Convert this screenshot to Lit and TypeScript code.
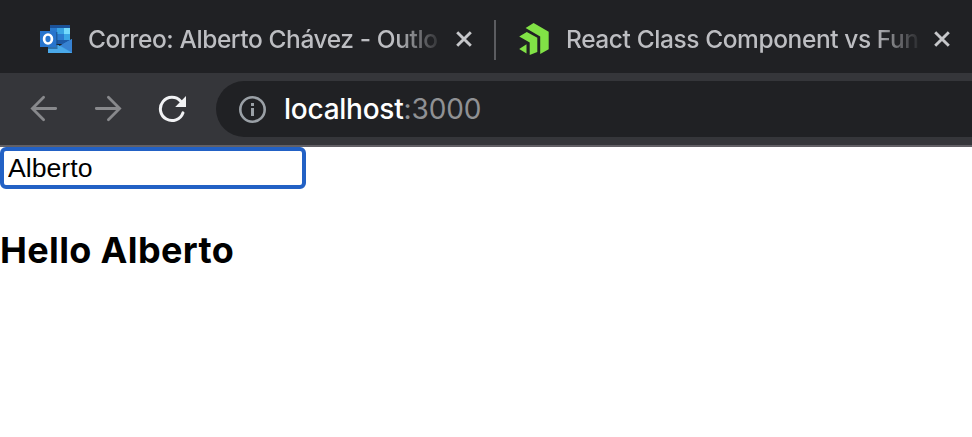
import { LitElement, html, css, svg } from "lit";
import { customElement, state } from "lit/decorators.js";

const outlookIcon = svg`
  <svg class="favicon" viewBox="0 0 32 28" width="32" height="28">
    <rect x="10" y="0" width="20" height="19" fill="#2a7fd0"></rect>
    <rect x="10" y="0" width="20" height="3" fill="#1b5299"></rect>
    <rect x="10" y="3" width="7" height="6" fill="#2979cd"></rect>
    <rect x="17" y="3" width="7" height="6" fill="#39a4e4"></rect>
    <rect x="24" y="3" width="6" height="6" fill="#74dafc"></rect>
    <rect x="17" y="9" width="7" height="6" fill="#2b7bd0"></rect>
    <rect x="24" y="9" width="6" height="6" fill="#3aa6e6"></rect>
    <rect x="17" y="15" width="13" height="4" fill="#1d5aa6"></rect>
    <path d="M8 16 L20 21 L32 14 V28 H8 Z" fill="#3f9bdf"></path>
    <path d="M20 20.5 L32 14 V27.5 Z" fill="#3782d2"></path>
    <path d="M8 28 V23 L18 20 L32 28 Z" fill="#4aa9e9"></path>
    <rect x="8" y="7" width="9.5" height="17" fill="#123b6d" opacity="0.5"></rect>
    <rect x="0" y="6" width="16" height="16" fill="#2774cd"></rect>
    <ellipse cx="8" cy="14" rx="3.9" ry="4.5" fill="none" stroke="#fff" stroke-width="2.7"></ellipse>
  </svg>`;

const progressIcon = svg`
  <svg class="favicon" viewBox="0 0 30 32" width="30" height="32">
    <g fill="#81e246">
      <path d="M14.6 0 L29.7 8.7 V26.2 L21.2 31 V13.6 L6.6 5 Z"></path>
      <path d="M7.8 8.9 L18.3 14.8 V28.9 L10.7 32 V19.6 L0.2 13.4 Z"></path>
      <path d="M7.5 21.2 V30.5 L0.2 26 Z"></path>
    </g>
  </svg>`;

const closeIcon = svg`
  <svg class="close" viewBox="0 0 16 16" width="16" height="16">
    <path d="M1.2 1.2 L14.8 14.8 M14.8 1.2 L1.2 14.8" fill="none" stroke="#c6c7ca" stroke-width="2.9"></path>
  </svg>`;

@customElement("browser-tabs")
class BrowserTabs extends LitElement {
  static styles = css`
    :host {
      display: flex;
      align-items: center;
      height: 73px;
      padding: 0 22px 0 40px;
      box-sizing: border-box;
      background: #202124;
      font-family: Inter, "Liberation Sans", sans-serif;
    }
    .tab { display: flex; align-items: center; height: 40px; margin-top: 5px; }
    .favicon { display: block; flex: none; }
    .title {
      flex: none;
      white-space: nowrap;
      height: 40px;
      line-height: 41px;
      margin-left: 16px;
      font-size: 24.5px;
      font-weight: 450;
      letter-spacing: -0.41px;
      color: #bdbec2;
      -webkit-mask-image: linear-gradient(90deg, #000 308px, transparent 356px);
    }
    .mail { width: 350px; }
    .article { width: 353px; margin-left: 17px; }
    .close { display: block; flex: none; margin-left: 18px; }
    .article + .close { margin-left: 15px; }
    .separator { width: 2px; height: 40px; margin: 7px 23px 0 22px; background: #5b5c60; }
  `;

  render() {
    return html`
      <div class="tab">
        ${outlookIcon}
        <div class="title mail">Correo: Alberto Chávez - Outlo</div>
        ${closeIcon}
      </div>
      <div class="separator"></div>
      <div class="tab">
        ${progressIcon}
        <div class="title article">React Class Component vs Fun</div>
        ${closeIcon}
      </div>
    `;
  }
}

@customElement("browser-toolbar")
class BrowserToolbar extends LitElement {
  static styles = css`
    :host {
      display: flex;
      align-items: center;
      height: 74px;
      box-sizing: border-box;
      border-bottom: 2px solid #626065;
      padding-left: 30px;
      background: #35363a;
      font-family: Inter, "Liberation Sans", sans-serif;
    }
    svg { display: block; flex: none; }
    .forward { margin-left: 36px; }
    .reload { margin-left: 36px; }
    .address {
      display: flex;
      align-items: center;
      flex: 1;
      height: 56px;
      margin-left: 30px;
      padding-left: 22px;
      border-radius: 28px 0 0 28px;
      background: #202124;
    }
    .url {
      margin-left: 17px;
      font-size: 28px;
      line-height: 57px;
      letter-spacing: -0.1px;
      white-space: nowrap;
      color: #909194;
    }
    .host { color: #fff; font-weight: 470; letter-spacing: -0.25px; }
  `;

  render() {
    return html`
      <svg width="28" height="28" viewBox="0 0 28 28" fill="none" stroke="#88898c" stroke-width="2.8" stroke-linecap="round">
        <path d="M25.7 13.5 H2.5 M13.6 2.3 L2.4 13.5 L13.6 24.7"></path>
      </svg>
      <svg class="forward" width="28" height="28" viewBox="0 0 28 28" fill="none" stroke="#88898c" stroke-width="2.8" stroke-linecap="round">
        <path d="M2.3 13.5 H25.5 M14.4 2.3 L25.6 13.5 L14.4 24.7"></path>
      </svg>
      <svg class="reload" width="28" height="28" viewBox="0 0 28 28">
        <path d="M24.9 17.9 A11.6 11.6 0 1 1 22.7 6.3" fill="none" stroke="#f1f2f4" stroke-width="3" stroke-linecap="round"></path>
        <path d="M28 1 V12 H17.2 Z" fill="#f1f2f4"></path>
      </svg>
      <div class="address">
        <svg width="29" height="28" viewBox="0 0 29 28">
          <circle cx="14.5" cy="14.5" r="12.2" fill="none" stroke="#9aa0a6" stroke-width="2.6"></circle>
          <rect x="13" y="8" width="3" height="3" fill="#9aa0a6"></rect>
          <rect x="13" y="13" width="3" height="8" fill="#9aa0a6"></rect>
        </svg>
        <div class="url"><span class="host">localhost</span>:3000</div>
      </div>
    `;
  }
}

@customElement("app-root")
class AppRoot extends LitElement {
  static styles = css`
    :host { display: block; height: 437px; overflow: hidden; background: #fff; }
    .name {
      display: block;
      width: 306px;
      height: 42px;
      box-sizing: border-box;
      margin: 0;
      padding: 0 4px;
      border: 4px solid #2261c5;
      border-radius: 6px;
      outline: none;
      background: #fff;
      color: #000;
      font: 26.67px "Liberation Sans", Arial, sans-serif;
    }
    .greeting {
      margin: 39px 0 0;
      font: 700 36px/44px Inter, "Liberation Sans", sans-serif;
      letter-spacing: 0.35px;
      color: #000;
    }
  `;

  @state() name = "Alberto";

  render() {
    return html`
      <browser-tabs></browser-tabs>
      <browser-toolbar></browser-toolbar>
      <input class="name" .value=${this.name}
        @input=${(e: InputEvent) => { this.name = (e.target as HTMLInputElement).value; }} />
      <h2 class="greeting">Hello ${this.name}</h2>
    `;
  }
}
